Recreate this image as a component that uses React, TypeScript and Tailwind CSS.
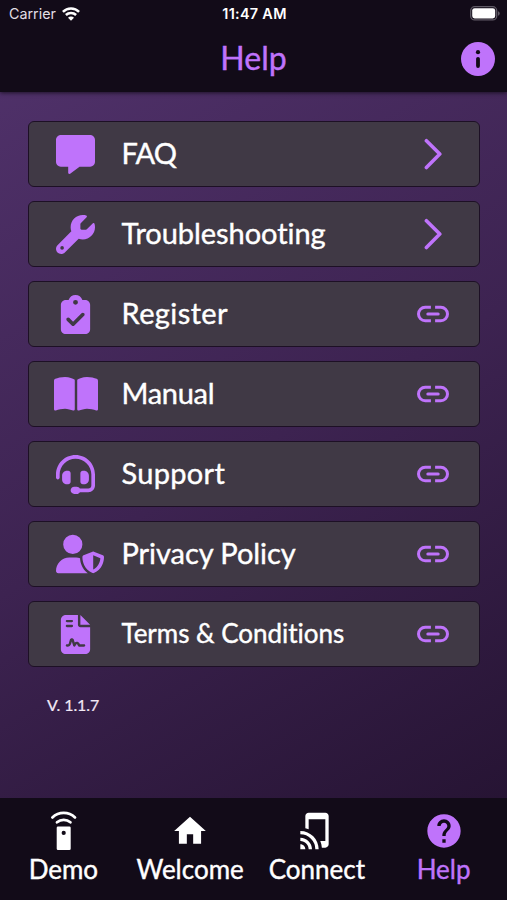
import type { ReactNode } from "react";
import {
  FaBookOpen,
  FaClipboardCheck,
  FaFileContract,
  FaHeadset,
  FaMessage,
  FaUserShield,
  FaWrench,
} from "react-icons/fa6";
import { MdHelp, MdHome, MdTapAndPlay } from "react-icons/md";

type HelpItem = {
  label: string;
  icon: ReactNode;
  iconBox: string;
  textClass: string;
  link?: boolean;
};

const items: HelpItem[] = [
  { label: "FAQ", icon: <FaMessage size={39} />, iconBox: "w-[39px]", textClass: "text-[29px] tracking-[-0.8px]" },
  { label: "Troubleshooting", icon: <FaWrench size={39} />, iconBox: "w-[39px]", textClass: "text-[29px] tracking-[-0.05px]" },
  { label: "Register", icon: <FaClipboardCheck size={39} />, iconBox: "w-[39px]", textClass: "text-[29px] tracking-[0.4px]", link: true },
  { label: "Manual", icon: <FaBookOpen size={44} className="shrink-0" />, iconBox: "w-[39px]", textClass: "text-[29px] tracking-[-0.3px]", link: true },
  { label: "Support", icon: <FaHeadset size={39} />, iconBox: "w-[39px]", textClass: "text-[29px] tracking-[0.3px]", link: true },
  { label: "Privacy Policy", icon: <FaUserShield size={48} />, iconBox: "w-12", textClass: "text-[29px] tracking-[-0.05px]", link: true },
  { label: "Terms & Conditions", icon: <FaFileContract size={39} />, iconBox: "w-[39px]", textClass: "text-[26px] tracking-[-0.02px]", link: true },
];

const tabs = [
  { label: "Demo", icon: <RemoteIcon /> },
  { label: "Welcome", icon: <MdHome size={38} /> },
  { label: "Connect", icon: <MdTapAndPlay size={40} /> },
  { label: "Help", icon: <MdHelp size={40} />, active: true },
];

function RemoteIcon() {
  return (
    <svg width="40" height="40" viewBox="0 0 40 40" fill="none" stroke="currentColor" strokeWidth="2.8" strokeLinecap="round">
      <path d="M9.4 6.4a16.4 16.4 0 0 1 22.6 0" />
      <path d="M14 11.3a10.2 10.2 0 0 1 13.4 0" />
      <path
        d="M15 15.4h11.4a1.3 1.3 0 0 1 1.3 1.3v21a1.3 1.3 0 0 1-1.3 1.3H15a1.3 1.3 0 0 1-1.3-1.3v-21a1.3 1.3 0 0 1 1.3-1.3Zm5.7 4.4a2.1 2.1 0 1 0 0 4.2 2.1 2.1 0 0 0 0-4.2Z"
        fill="currentColor"
        fillRule="evenodd"
        stroke="none"
      />
    </svg>
  );
}

function ChevronIcon() {
  return (
    <svg width="32" height="32" viewBox="0 0 32 32" fill="none">
      <path d="M9.4 2.7 22.8 16 9.4 29.5" stroke="currentColor" strokeWidth="3.6" strokeLinecap="round" strokeLinejoin="round" />
    </svg>
  );
}

function LinkIcon() {
  return (
    <svg width="32" height="32" viewBox="0 0 32 32" fill="none" stroke="currentColor" strokeWidth="3">
      <path d="M13.9 9.3H8.2a6.7 6.7 0 0 0 0 13.4h5.7" />
      <path d="M18.1 9.3h5.7a6.7 6.7 0 0 1 0 13.4h-5.7" />
      <path d="M10.8 16h10.4" strokeLinecap="round" />
    </svg>
  );
}

function InfoIcon() {
  return (
    <svg width="34" height="34" viewBox="0 0 34 34">
      <circle cx="17" cy="17" r="17" fill="#bf73fb" />
      <circle cx="17" cy="10.2" r="2.1" fill="#120b18" />
      <path d="M17 16.8v7.2" stroke="#120b18" strokeWidth="3.8" strokeLinecap="round" />
    </svg>
  );
}

function WifiIcon() {
  return (
    <svg width="18" height="14" viewBox="0 0 18 14" fill="none" stroke="white" strokeWidth="2.5">
      <path d="M.9 4.9a11.3 11.3 0 0 1 16.2 0" />
      <path d="M3.9 8a7.2 7.2 0 0 1 10.2 0" />
      <path d="M9 13.8 6 10.8a4.2 4.2 0 0 1 6 0Z" fill="white" stroke="none" />
    </svg>
  );
}

function BatteryIcon() {
  return (
    <svg width="30" height="15" viewBox="0 0 30 15">
      <rect x="0.7" y="0.7" width="26" height="13.2" rx="4" fill="none" stroke="#605b66" strokeWidth="1.3" />
      <rect x="2.2" y="2.2" width="23" height="10.2" rx="2.4" fill="white" />
      <path d="M28 5.2a2.4 2.4 0 0 1 0 4.6Z" fill="#605b66" />
    </svg>
  );
}

function StatusBar() {
  return (
    <div className="grid h-[27px] grid-cols-[1fr_auto_1fr] items-center pl-[9px] pr-[7px] font-[Inter,sans-serif] text-white">
      <div className="flex items-center gap-1.5 text-[14.3px] text-[#e2dfe5]">
        <span>Carrier</span>
        <WifiIcon />
      </div>
      <span className="text-center text-[14.4px] font-semibold tracking-[0.3px]">11:47 AM</span>
      <div className="flex justify-end">
        <BatteryIcon />
      </div>
    </div>
  );
}

function HelpRow({ item }: { item: HelpItem }) {
  return (
    <button className="flex h-[66px] w-full items-center rounded-[6px] border-[1.5px] border-[#1d1025] bg-[#403945] pl-[27px] pr-[30px] text-left">
      <span className="flex w-[65.5px] text-[#bf73fb]">
        <span className={`flex shrink-0 justify-center ${item.iconBox}`}>{item.icon}</span>
      </span>
      <span className={`flex-1 whitespace-nowrap pb-[3px] leading-none text-white [-webkit-text-stroke:0.4px_white] ${item.textClass}`}>
        {item.label}
      </span>
      <span className="text-[#bf73fb]">{item.link ? <LinkIcon /> : <ChevronIcon />}</span>
    </button>
  );
}

export default function App() {
  return (
    <div className="flex h-[900px] w-[507px] flex-col overflow-hidden bg-linear-150 from-[#52336d] via-[#3d2351] to-[#22112e] font-[Lato,sans-serif] [font-variant-ligatures:none]">
      <header className="h-[92px] shrink-0 bg-[#120b18] shadow-[0_1px_4px_rgba(18,11,24,0.8)]">
        <StatusBar />
        <div className="grid h-[63px] grid-cols-[1fr_auto_1fr] items-center px-3">
          <span />
          <h1 className="pb-0.5 text-[32px] leading-none text-[#bf73fb] [-webkit-text-stroke:0.4px_#bf73fb]">Help</h1>
          <span className="flex justify-end">
            <InfoIcon />
          </span>
        </div>
      </header>

      <main className="flex-1 pl-7 pr-[27px] pt-[29px]">
        <div className="flex flex-col gap-3.5">
          {items.map((item) => (
            <HelpRow key={item.label} item={item} />
          ))}
        </div>
        <p className="mt-[26px] pl-[19px] text-base tracking-[-0.1px] text-[#f2e9f6] [-webkit-text-stroke:0.2px_#f2e9f6]">
          V. 1.1.7
        </p>
      </main>

      <nav className="grid h-[102px] shrink-0 grid-cols-4 bg-[#120b18]">
        {tabs.map((tab) => (
          <button
            key={tab.label}
            className={`flex flex-col items-center pt-3 ${
              tab.active
                ? "text-[#bf73fb] [-webkit-text-stroke:0.4px_#bf73fb]"
                : "text-white [-webkit-text-stroke:0.4px_white]"
            }`}
          >
            <span className="flex h-[42px] items-center">{tab.icon}</span>
            <span className="pt-px text-[26px] leading-8">{tab.label}</span>
          </button>
        ))}
      </nav>
    </div>
  );
}
